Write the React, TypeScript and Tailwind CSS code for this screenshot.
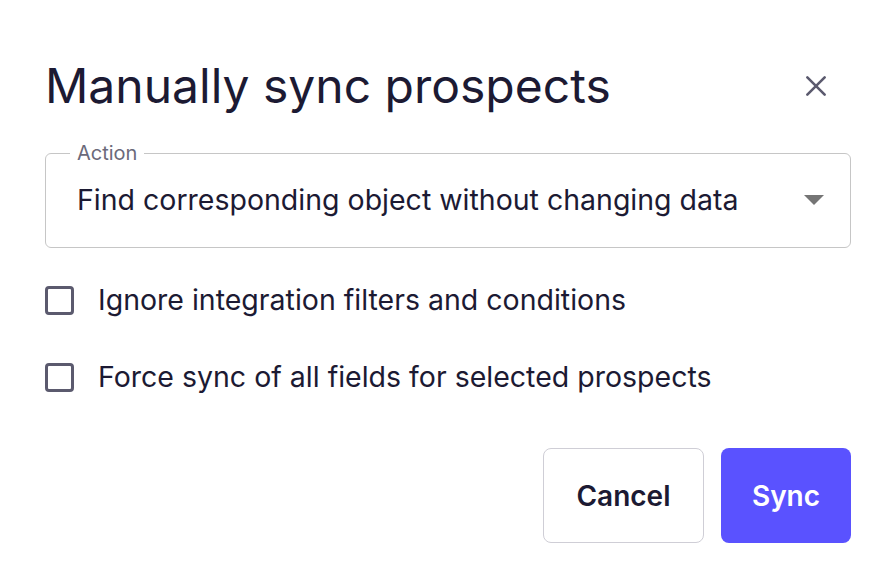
import React from 'react';

const Checkbox: React.FC<{ label: string }> = ({ label }) => (
  <label className="flex items-center gap-[24px] cursor-pointer">
    <span className="w-[29px] h-[29px] rounded-[4px] border-[3px] border-[#5b5a6e] bg-white shrink-0" />
    <span className="text-[28.5px] text-[#1c1a33] leading-none">{label}</span>
  </label>
);

export default function App() {
  return (
    <div className="w-[892px] h-[566px] bg-white font-['Inter',sans-serif] text-[#1c1a33] pl-[45px] pr-[41px] pt-[56px]">
      {/* Header */}
      <div className="flex items-center justify-between">
        <h2 className="text-[48px] leading-[60px] font-normal">Manually sync prospects</h2>
        <button className="w-[40px] h-[40px] flex items-center justify-center mr-[15px]">
          <svg width="26" height="26" viewBox="0 0 24 24" fill="none" stroke="#5b5a6e" strokeWidth="2.4" strokeLinecap="round">
            <path d="M4 4L20 20M20 4L4 20" />
          </svg>
        </button>
      </div>

      {/* Select */}
      <fieldset className="mt-[26px] border-[1.5px] border-[#c6c6c6] rounded-[6px] h-[106px] pl-[31px] pr-[24px] flex items-center">
        <legend className="px-[7px] text-[20px] text-[#6b6a7a] leading-[22px] -ml-[7px]">Action</legend>
        <div className="flex items-center justify-between w-full -mt-[11px]">
          <span className="text-[28.5px] leading-none">Find corresponding object without changing data</span>
          <svg width="20" height="10" viewBox="0 0 20 10" className="mr-[2px]">
            <path d="M0 0H20L10 10Z" fill="#757575" />
          </svg>
        </div>
      </fieldset>

      {/* Options */}
      <div className="flex flex-col gap-[48px] mt-[38px]">
        <Checkbox label="Ignore integration filters and conditions" />
        <Checkbox label="Force sync of all fields for selected prospects" />
      </div>

      {/* Footer */}
      <div className="flex justify-end gap-[17px] mt-[56px]">
        <button className="w-[161px] h-[95px] rounded-[8px] border-[1.5px] border-[#cfced6] bg-white text-[28px] font-semibold text-[#1c1a33]">
          Cancel
        </button>
        <button className="w-[130px] h-[95px] rounded-[8px] bg-[#5a52ff] text-[28px] font-semibold text-white">
          Sync
        </button>
      </div>
    </div>
  );
}
